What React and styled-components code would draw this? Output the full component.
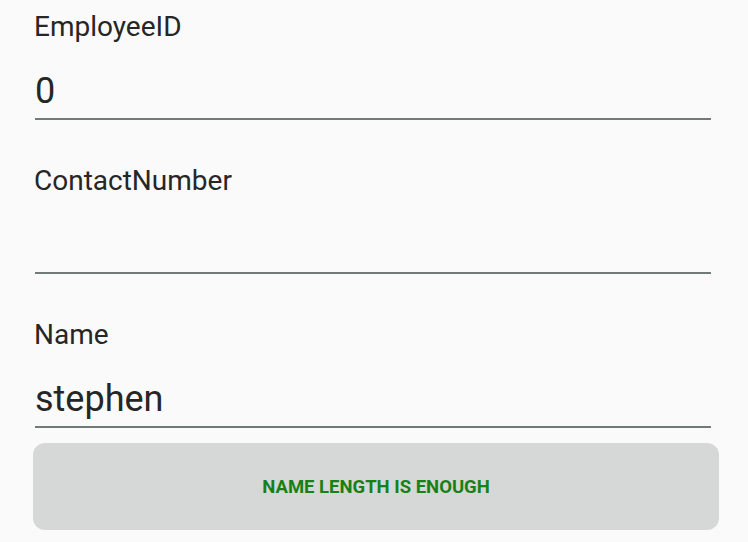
import React from "react";
import styled, { createGlobalStyle } from "styled-components";

const Global = createGlobalStyle`
  html, body { margin: 0; padding: 0; background: #fafafa; }
  body { font-family: Roboto, "Noto Sans", sans-serif; }
`;

const Page = styled.div`
  width: 748px;
  height: 542px;
  overflow: hidden;
  background: #fafafa;
  display: flex;
  flex-direction: column;
  padding: 11px 37px 0 35px;
  box-sizing: border-box;
`;

const Field = styled.div`
  display: flex;
  flex-direction: column;
  margin-bottom: ${(p) => (p.$last ? "15px" : "45px")};
`;

const Label = styled.div`
  font-size: 28px;
  line-height: 32px;
  height: 32px;
  color: #262626;
  margin-left: -1px;
`;

const Value = styled.div`
  font-size: 36px;
  line-height: 42px;
  height: 42px;
  color: #262626;
  margin-top: 27px;
  padding-bottom: 6px;
  border-bottom: 2px solid #727a75;
`;

const Button = styled.div`
  margin: 0 -8px 0 -2px;
  height: 87px;
  border-radius: 12px;
  background: #d6d7d7;
  display: flex;
  align-items: center;
  justify-content: center;
  font-size: 18.5px;
  font-weight: 700;
  color: #178017;
  text-transform: uppercase;
`;

export default function App() {
  const fields = [
    { label: "EmployeeID", value: "0" },
    { label: "ContactNumber", value: "" },
    { label: "Name", value: "stephen" },
  ];
  return (
    <>
      <Global />
      <Page>
        {fields.map((f, i) => (
          <Field key={f.label} $last={i === fields.length - 1}>
            <Label>{f.label}</Label>
            <Value>{f.value}</Value>
          </Field>
        ))}
        <Button>Name length is enough</Button>
      </Page>
    </>
  );
}
